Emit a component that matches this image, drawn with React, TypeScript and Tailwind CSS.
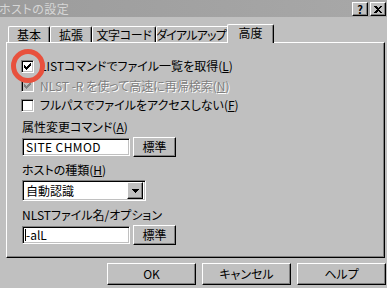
const raised =
  'border border-t-white border-l-white border-r-black border-b-black shadow-[inset_-1px_-1px_#808080] bg-[#c0c0c0]';
const sunken =
  'border border-t-[#808080] border-l-[#808080] border-r-white border-b-white shadow-[inset_1px_1px_#000,inset_-1px_-1px_#c0c0c0]';

function CheckMark({ color }: { color: string }) {
  return (
    <svg width="7" height="7" viewBox="0 0 7 7" shapeRendering="crispEdges">
      <path
        fill={color}
        d="M6 0h1v1h-1z M5 1h2v1h-2z M0 2h1v1h-1z M4 2h3v1h-3z M0 3h2v1h-2z M3 3h3v1h-3z M0 4h5v1h-5z M1 5h3v1h-3z M2 6h1v1h-1z"
      />
    </svg>
  );
}

function CheckBox({ checked, disabled }: { checked: boolean; disabled?: boolean }) {
  return (
    <span
      className={`w-[13px] h-[13px] shrink-0 flex items-center justify-center ${sunken} ${
        disabled ? 'bg-[#c0c0c0]' : 'bg-white'
      }`}
    >
      {checked && <CheckMark color={disabled ? '#808080' : '#000'} />}
    </span>
  );
}

function Key({ k }: { k: string }) {
  return (
    <>
      (<span className="underline underline-offset-[1px]">{k}</span>)
    </>
  );
}

function Tab({
  label,
  selected,
  width,
  className = '',
}: {
  label: string;
  selected?: boolean;
  width: string;
  className?: string;
}) {
  if (selected) {
    return (
      <div
        className={`${width} h-[19px] -mb-px -ml-[2px] relative z-10 bg-[#c0c0c0] border-t border-l border-r border-t-white border-l-white border-r-black rounded-t-[2px] shadow-[inset_-1px_0_#808080] flex justify-center pt-[1px]`}
      >
        {label}
      </div>
    );
  }
  return (
    <div
      className={`${width} h-[16px] overflow-hidden border-t border-l border-r border-t-white border-l-white border-r-black rounded-t-[2px] shadow-[inset_-1px_0_#808080] flex justify-center pt-[1px] ${className}`}
    >
      {label}
    </div>
  );
}

function PushButton({ children, className }: { children: React.ReactNode; className: string }) {
  return <div className={`${raised} ${className} flex items-center justify-center`}>{children}</div>;
}

export default function App() {
  return (
    <div className="w-[387px] h-[288px] bg-[#c0c0c0] relative overflow-hidden whitespace-nowrap text-[12px] leading-[14px] text-black font-['Noto_Sans_CJK_JP','Noto_Sans',sans-serif] [font-feature-settings:'palt']">
      {/* title bar */}
      <div className="h-[17px] bg-gradient-to-r from-[#9c9c9c] to-[#a8a8a8] flex items-center justify-between">
        <span className="-ml-[1px] text-[#d6d6d6] tracking-[0.5px]">ホストの設定</span>
        <div className="flex gap-[2px] mr-[1px] mt-[1px]">
          <PushButton className="w-[16px] h-[14px] font-bold text-[11px]">?</PushButton>
          <PushButton className="w-[16px] h-[14px]">
            <svg width="8" height="7" viewBox="0 0 8 7" shapeRendering="crispEdges">
              <path d="M0 0h2l2 2 2-2h2L5 3.5 8 7H6L4 5 2 7H0l3-3.5z" fill="#000" />
            </svg>
          </PushButton>
        </div>
      </div>

      {/* tabs */}
      <div className="mt-[7px] h-[18px] pl-[8px] flex items-end">
        <Tab label="基本" width="w-[42px]" />
        <Tab label="拡張" width="w-[42px]" />
        <Tab label="文字コード" width="w-[64px]" className="tracking-[-0.3px]" />
        <Tab label="ダイアルアップ" width="w-[73px]" className="tracking-[-0.8px] pr-[3px]" />
        <Tab label="高度" width="w-[47px]" selected />
      </div>

      {/* panel */}
      <div className="ml-[6px] w-[379px] h-[216px] border border-t-white border-l-white border-r-black border-b-black shadow-[inset_-1px_-1px_#808080] pl-[14px] pt-[13px]">
        <div className="h-[20px] flex items-center gap-[6px]">
          <CheckBox checked />
          <span>
            LISTコマンドでファイル一覧を取得<Key k="L" />
          </span>
        </div>
        <div className="h-[19px] flex items-center gap-[6px]">
          <CheckBox checked disabled />
          <span className="text-[#808080] [text-shadow:1px_1px_0_#fff]">
            NLST -R を使って高速に再帰検索<Key k="N" />
          </span>
        </div>
        <div className="h-[20px] flex items-center gap-[6px]">
          <CheckBox checked={false} />
          <span>
            フルパスでファイルをアクセスしない<Key k="F" />
          </span>
        </div>

        <div className="pl-[1px]">
          <div className="mt-[4px] h-[16px] flex items-center">
            属性変更コマンド<Key k="A" />
          </div>
          <div className="mt-[2px] flex items-start gap-[3px]">
            <div className={`${sunken} bg-white w-[108px] h-[18px] mt-[1px] flex items-center pl-[3px] tracking-[0.4px]`}>
              SITE CHMOD
            </div>
            <PushButton className="w-[43px] h-[20px]">標準</PushButton>
          </div>

          <div className="mt-[5px] h-[16px] flex items-center">
            ホストの種類<Key k="H" />
          </div>
          <div className={`${sunken} bg-white mt-[2px] w-[124px] h-[21px] flex items-center justify-between pl-[3px] pr-[2px]`}>
            <span>自動認識</span>
            <PushButton className="w-[16px] h-[17px]">
              <svg width="7" height="4" viewBox="0 0 7 4" shapeRendering="crispEdges">
                <path d="M0 0h7v1H0z M1 1h5v1H1z M2 2h3v1H2z M3 3h1v1H3z" fill="#000" />
              </svg>
            </PushButton>
          </div>

          <div className="mt-[6px] h-[16px] flex items-center">NLSTファイル名/オプション</div>
          <div className="mt-[2px] flex items-start gap-[3px]">
            <div className={`${sunken} bg-white w-[108px] h-[18px] mt-[1px] flex items-center pl-[2px]`}>
              <span className="w-px h-[12px] bg-black" />
              <span>-alL</span>
            </div>
            <PushButton className="w-[43px] h-[20px]">標準</PushButton>
          </div>
        </div>
      </div>

      {/* dialog buttons */}
      <div className="mt-[5px] pr-[1px] flex justify-end gap-[6px]">
        <PushButton className="w-[89px] h-[22px]">OK</PushButton>
        <PushButton className="w-[89px] h-[22px]">キャンセル</PushButton>
        <PushButton className="w-[89px] h-[22px]">ヘルプ</PushButton>
      </div>

      {/* red annotation circle */}
      <svg className="absolute left-[11px] top-[49px]" width="34" height="34" viewBox="0 0 34 34">
        <circle cx="17" cy="17" r="14.5" fill="none" stroke="#e8513d" strokeWidth="5" />
      </svg>
    </div>
  );
}
